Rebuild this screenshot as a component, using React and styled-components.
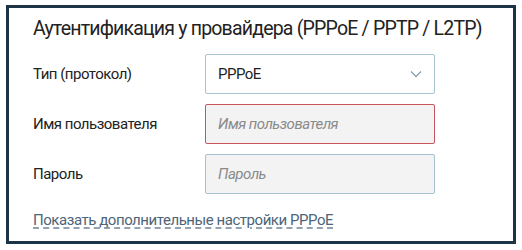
import React from 'react';
import styled, { createGlobalStyle } from 'styled-components';

const GlobalStyle = createGlobalStyle`
  html, body {
    margin: 0;
    padding: 0;
    background: #ffffff;
  }
  body {
    font-family: Roboto, "Liberation Sans", sans-serif;
    color: #222;
  }
`;

const Frame = styled.section`
  box-sizing: border-box;
  width: 510px;
  height: 239px;
  margin: 5px 0 0 6px;
  border: 3px solid #1d3446;
  padding: 9px 0 0 24px;
`;

const Title = styled.h2`
  margin: 0 0 13px;
  font-size: 19.5px;
  line-height: 24px;
  letter-spacing: -0.8px;
  font-weight: 400;
  white-space: nowrap;
  color: #222;
`;

const Form = styled.div`
  display: grid;
  grid-template-columns: 172px 230px;
  row-gap: 10px;
  align-items: center;
`;

const Label = styled.label`
  font-size: 15px;
  letter-spacing: -0.5px;
  color: #222;
`;

const Field = styled.div`
  position: relative;
  box-sizing: border-box;
  height: 40px;
  display: flex;
  align-items: center;
  padding: 0 12px;
  border: 1px solid ${(p) => (p.$error ? '#c9565e' : '#a6c3d1')};
  border-radius: 2px;
  background: ${(p) => (p.$filled ? '#ffffff' : '#f3f3f3')};
  font-size: 15px;
  letter-spacing: -0.5px;
`;

const Placeholder = styled.span`
  font-style: italic;
  color: #8a8a8a;
`;

const Chevron = styled.svg`
  position: absolute;
  right: 12px;
  top: 50%;
  transform: translateY(-50%);
`;

const MoreLink = styled.a`
  display: inline-block;
  margin-top: 16px;
  font-size: 15px;
  line-height: 20px;
  letter-spacing: -0.45px;
  color: #4d6579;
  text-decoration: underline dashed;
  text-decoration-color: #6f8496;
  text-underline-offset: 3px;
  cursor: pointer;
`;

function App() {
  return (
    <>
      <GlobalStyle />
      <Frame>
        <Title>Аутентификация у провайдера (PPPoE / PPTP / L2TP)</Title>
        <Form>
          <Label>Тип (протокол)</Label>
          <Field $filled>
            PPPoE
            <Chevron width="12" height="8" viewBox="0 0 12 8">
              <path d="M1 1.5 L6 6.5 L11 1.5" fill="none" stroke="#8aa0b1" strokeWidth="1.3" />
            </Chevron>
          </Field>

          <Label>Имя пользователя</Label>
          <Field $error>
            <Placeholder>Имя пользователя</Placeholder>
          </Field>

          <Label>Пароль</Label>
          <Field>
            <Placeholder>Пароль</Placeholder>
          </Field>
        </Form>
        <MoreLink>Показать дополнительные настройки PPPoE</MoreLink>
      </Frame>
    </>
  );
}

export default App;
